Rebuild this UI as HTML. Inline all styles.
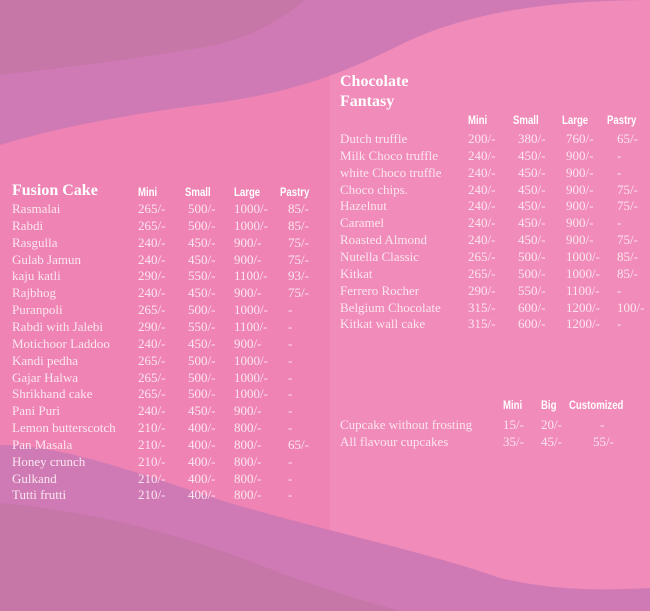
<!DOCTYPE html>
<html><head><style>
body{margin:0;width:650px;height:611px;overflow:hidden;position:relative;background:#ef84b4;font-family:"Liberation Serif",serif;color:#fbe6ef}
svg{position:absolute;left:0;top:0}
.r{position:absolute;height:17px;font-size:13px;line-height:17px;white-space:nowrap}
.r span{position:absolute;top:0}
.h{position:absolute;font-family:"Liberation Sans",sans-serif;font-weight:bold;font-size:12px;color:#fff;transform:scaleX(.8);transform-origin:left}
.t{position:absolute;font-weight:bold;font-size:16px;color:#fff;line-height:20px}
</style></head><body>
<svg width="650" height="611">
<rect x="330" y="0" width="320" height="611" fill="#f18bb9"/>
<path d="M0 0H650C560 0 470 10 400 45C330 80 280 95 200 105C110 117 50 130 0 145Z" fill="#d07ab5"/>
<path d="M0 0H305C280 20 250 40 200 48C130 60 60 68 0 75Z" fill="#c776a8"/>
<path d="M0 445C60 445 130 470 220 500C320 530 420 550 500 578C560 592 610 590 650 588V611H0Z" fill="#d07ab5"/>
<path d="M0 503C80 510 170 530 260 565C310 585 360 600 400 611H0Z" fill="#c776a8"/>
</svg>
<div class="t" style="left:12px;top:181px">Fusion Cake</div>
<div class="h" style="left:138px;top:185px">Mini</div>
<div class="h" style="left:185px;top:185px">Small</div>
<div class="h" style="left:234px;top:185px">Large</div>
<div class="h" style="left:280px;top:185px">Pastry</div>
<div class="t" style="left:340px;top:72px">Chocolate<br>Fantasy</div>
<div class="h" style="left:468px;top:113px">Mini</div>
<div class="h" style="left:513px;top:113px">Small</div>
<div class="h" style="left:562px;top:113px">Large</div>
<div class="h" style="left:607px;top:113px">Pastry</div>
<div class="h" style="left:503px;top:398px">Mini</div>
<div class="h" style="left:541px;top:398px">Big</div>
<div class="h" style="left:569px;top:398px">Customized</div>
<script>
function rows(data,y0,cols){var h='';data.forEach(function(d,i){h+='<div class="r" style="left:0;top:'+(y0+i*16.85)+'px;width:650px">';d.forEach(function(c,j){h+='<span style="left:'+cols[j]+'px">'+c+'</span>'});h+='</div>'});document.body.insertAdjacentHTML('beforeend',h)}
rows([
["Rasmalai","265/-","500/-","1000/-","85/-"],["Rabdi","265/-","500/-","1000/-","85/-"],["Rasgulla","240/-","450/-","900/-","75/-"],["Gulab Jamun","240/-","450/-","900/-","75/-"],["kaju katli","290/-","550/-","1100/-","93/-"],["Rajbhog","240/-","450/-","900/-","75/-"],["Puranpoli","265/-","500/-","1000/-","-"],["Rabdi with Jalebi","290/-","550/-","1100/-","-"],["Motichoor Laddoo","240/-","450/-","900/-","-"],["Kandi pedha","265/-","500/-","1000/-","-"],["Gajar Halwa","265/-","500/-","1000/-","-"],["Shrikhand cake","265/-","500/-","1000/-","-"],["Pani Puri","240/-","450/-","900/-","-"],["Lemon butterscotch","210/-","400/-","800/-","-"],["Pan Masala","210/-","400/-","800/-","65/-"],["Honey crunch","210/-","400/-","800/-","-"],["Gulkand","210/-","400/-","800/-","-"],["Tutti frutti","210/-","400/-","800/-","-"]
],200,[12,138,188,234,288]);
rows([
["Dutch truffle","200/-","380/-","760/-","65/-"],["Milk Choco truffle","240/-","450/-","900/-","-"],["white Choco truffle","240/-","450/-","900/-","-"],["Choco chips.","240/-","450/-","900/-","75/-"],["Hazelnut","240/-","450/-","900/-","75/-"],["Caramel","240/-","450/-","900/-","-"],["Roasted Almond","240/-","450/-","900/-","75/-"],["Nutella Classic","265/-","500/-","1000/-","85/-"],["Kitkat","265/-","500/-","1000/-","85/-"],["Ferrero Rocher","290/-","550/-","1100/-","-"],["Belgium Chocolate","315/-","600/-","1200/-","100/-"],["Kitkat wall cake","315/-","600/-","1200/-","-"]
],130,[340,468,518,566,617]);
rows([["Cupcake without frosting","15/-","20/-","-"],["All flavour cupcakes","35/-","45/-",""]],416,[340,503,541,600]);
</script>
<div class="r" style="left:593px;top:433px">55/-</div>
</body></html>
